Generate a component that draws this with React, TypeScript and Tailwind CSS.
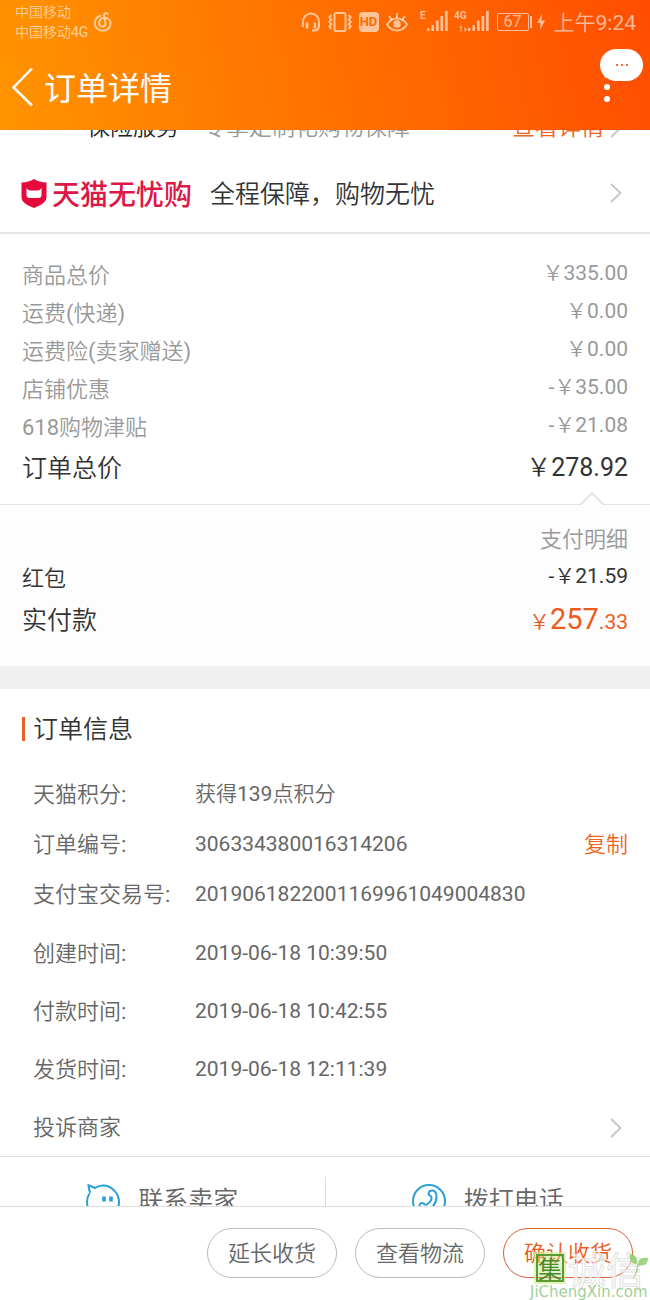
import { ReactNode } from 'react';

const prices = [
  { label: '商品总价', value: '￥335.00' },
  { label: '运费(快递)', value: '￥0.00' },
  { label: '运费险(卖家赠送)', value: '￥0.00' },
  { label: '店铺优惠', value: '-￥35.00' },
  { label: '618购物津贴', value: '-￥21.08' },
];

const ids = [
  { label: '天猫积分:', value: '获得139点积分' },
  { label: '订单编号:', value: '306334380016314206', copy: true },
  { label: '支付宝交易号:', value: '2019061822001169961049004830' },
];

const times = [
  { label: '创建时间:', value: '2019-06-18 10:39:50' },
  { label: '付款时间:', value: '2019-06-18 10:42:55' },
  { label: '发货时间:', value: '2019-06-18 12:11:39' },
];

const Chevron = () => (
  <svg className="w-3 h-5 mr-1 shrink-0" viewBox="0 0 12 20" fill="none" stroke="#c8c8c8" strokeWidth="2">
    <path d="M1 1l9.5 9L1 19" />
  </svg>
);

const MusicIcon = () => (
  <svg className="w-5 h-5" viewBox="0 0 20 20" fill="none" stroke="currentColor" strokeWidth="2" strokeLinecap="round">
    <path d="M7.5 3.8C4 5 1.8 7.800 1.8 11.200c0 4.300 3.500 7.500 7.800 7.500s7.900-3.100 7.900-7.200c0-3.300-2.600-5.700-6-5.700-3 0-5.400 2-5.400 4.900 0 2.300 1.600 3.800 3.500 3.800s3.200-1.500 2.900-3.300L11.200 4.600c-.4-2 .2-3.400 1.600-3.500.8 0 1.400.3 1.900.8" />
  </svg>
);

const HeadsetIcon = () => (
  <svg className="w-5 h-5" viewBox="0 0 20 20" fill="none" stroke="currentColor" strokeWidth="2">
    <path d="M2 15V9.500a8 8 0 0 1 16 0V14c0 3-1.800 4.600-5 4.600h-2" />
    <path d="M6 10.500v6M14 10.500v6" strokeWidth="2.600" />
  </svg>
);

const VibrateIcon = () => (
  <svg className="w-6 h-5" viewBox="0 0 24 20" fill="none" stroke="currentColor" strokeWidth="2">
    <rect x="6.500" y="1" width="11" height="18" rx="1.500" />
    <path d="M3.300 3l-2 2.300 2 2.300-2 2.300 2 2.300-2 2.300 2 2.300M20.700 3l2 2.300-2 2.300 2 2.300-2 2.300 2 2.300-2 2.300" />
  </svg>
);

const EyeIcon = () => (
  <svg className="w-[22px] h-5" viewBox="0 0 22 20" fill="none" stroke="currentColor" strokeWidth="2">
    <path d="M1 12.500C3.500 8.500 7 6.500 11 6.500s7.500 2 10 6c-2.500 4-6 6-10 6s-7.500-2-10-6z" />
    <circle cx="11" cy="12" r="3.800" fill="currentColor" stroke="none" />
    <path d="M11 1v5M3 4l3 4M19 4l-3 4" />
  </svg>
);

const Signal = ({ label, data }: { label: string; data?: boolean }) => (
  <div className="flex h-6">
    <div className="flex flex-col w-3 items-end pr-px">
      <span className="text-[10px] leading-3 font-bold">{label}</span>
      {data && (
        <svg className="w-2 h-2 mt-[3px]" viewBox="0 0 8 8" fill="currentColor">
          <path d="M2.500 0v7h-1V3H0zM5.500 2L8 4.500 5.500 7z" />
        </svg>
      )}
    </div>
    <svg className="w-[22px] h-5 mt-px" viewBox="0 0 22 20" fill="currentColor">
      <path d="M0 17h2.500v3H0zM4.500 14H7v6H4.500zM9 9.500h2.700V20H9zM13.500 5h2.700v15h-2.700zM18 0h2.700v20H18z" />
    </svg>
  </div>
);

const StatusBar = () => (
  <div className="flex items-center justify-between h-11 pl-[15px] pr-[14px] text-white/60">
    <div className="flex items-center gap-[5px]">
      <div className="text-[14px] leading-5">
        <p>中国移动</p>
        <p>中国移动4G</p>
      </div>
      <MusicIcon />
    </div>
    <div className="flex items-center gap-[7px]">
      <HeadsetIcon />
      <VibrateIcon />
      <span className="flex items-center justify-center w-5 h-5 rounded-sm bg-white/60 text-[13px] font-bold text-[#ff6a00]">HD</span>
      <EyeIcon />
      <Signal label="E" />
      <Signal label="4G" data />
      <div className="flex items-center gap-px mr-[2px]">
        <span className="flex items-center justify-center w-8 h-[18px] border border-white/60 rounded-xs text-[16px]">67</span>
        <span className="w-[2px] h-3 bg-white/60" />
        <svg className="w-2 h-4 ml-1" viewBox="0 0 8 16" fill="currentColor">
          <path d="M5 0L0 9h3.500L3 16l5-9.500H4.500z" />
        </svg>
      </div>
      <span className="pt-[2px] text-[21px] leading-6">上午9:24</span>
    </div>
  </div>
);

const Header = () => (
  <header className="h-[130px] shrink-0 bg-linear-[78deg] from-[#ff9400] to-[#ff4d00] text-white">
    <StatusBar />
    <div className="relative flex items-center h-[86px] pl-3 pr-10">
      <button aria-label="返回" className="mr-[11px]">
        <svg className="w-[21px] h-10" viewBox="0 0 21 40" fill="none" stroke="currentColor" strokeWidth="2.500">
          <path d="M20 1.500L1.500 20.500 20 38.500" />
        </svg>
      </button>
      <h1 className="pt-1 font-[Roboto,'Noto_Sans_CJK_SC',sans-serif] text-[32px] leading-10">订单详情</h1>
      <button aria-label="更多" className="flex flex-col gap-[6px] ml-auto">
        <span className="size-[6px] rounded-full bg-white" />
        <span className="size-[6px] rounded-full bg-white" />
        <span className="size-[6px] rounded-full bg-white" />
      </button>
      <button aria-label="消息" className="absolute top-[5px] right-[7px] flex items-center justify-center gap-[3px] w-[43px] h-8 rounded-full bg-white">
        <span className="size-[2px] bg-[#f26a3a]" />
        <span className="size-[2px] bg-[#f26a3a]" />
        <span className="size-[2px] bg-[#f26a3a]" />
      </button>
    </div>
  </header>
);

const Services = () => (
  <section className="border-b-2 border-[#e6e6e6]">
    <div className="flex items-center h-10 -mt-[22px] pl-[87px] pr-6 text-[23px] leading-8">
      <span className="text-[#222]">保险服务</span>
      <span className="ml-6 text-[#999]">专享定制化购物保障</span>
      <a href="#detail" className="ml-auto mr-[6px] text-[#f0641e]">查看详情</a>
      <Chevron />
    </div>
    <a href="#tmall" className="flex items-center h-[84px] pt-[6px] pl-[21px] pr-6">
      <svg className="w-[26px] h-[29px] mr-[5px]" viewBox="0 0 26 29">
        <path d="M13 0c3.500 2.300 7.500 3.300 12.500 3.500V18c0 5-5 8-12.500 11C5.500 26 .5 23 .5 18V3.500C5.500 3.300 9.500 2.300 13 0z" fill="#e60a3c" />
        <path d="M5.500 9c1 1.500 2 2.500 3.500 2.500h8c1.500 0 2.500-1 3.500-2.500v7c0 2-1 3-3 3h-9c-2 0-3-1-3-3z" fill="#fff" />
      </svg>
      <span className="font-['Noto_Sans_CJK_SC',sans-serif] text-[28px] leading-10 font-medium text-[#dd1746]">天猫无忧购</span>
      <span className="pt-1 ml-[18px] mr-auto text-[25px] leading-10 text-[#333]">全程保障，购物无忧</span>
      <Chevron />
    </a>
  </section>
);

const Row = ({ label, children }: { label: string; children: ReactNode }) => (
  <div className="flex items-center justify-between h-[38px]">
    <dt className="pt-[2px] text-[22px]">{label}</dt>
    <dd>{children}</dd>
  </div>
);

const Prices = () => (
  <section className="relative pt-[21px] pb-[13px] px-[22px] border-b border-[#e4e4e4]">
    <dl className="text-[21px] text-[#999]">
      {prices.map((p) => (
        <Row key={p.label} label={p.label}>
          {p.value}
        </Row>
      ))}
      <div className="flex items-center justify-between h-[46px] text-[25px] text-[#333]">
        <dt className="pt-[2px]">订单总价</dt>
        <dd>￥278.92</dd>
      </div>
    </dl>
    <svg className="absolute right-[46px] -bottom-px w-6 h-[13px]" viewBox="0 0 24 13" fill="#fdfdfd" stroke="#dcdcdc" strokeWidth="1.500">
      <path d="M0 13L12 1l12 12" />
    </svg>
  </section>
);

const Payment = () => (
  <section className="pt-4 pb-[23px] px-[22px] bg-[#fdfdfd]">
    <p className="h-[37px] leading-[38px] text-[22px] text-right text-[#999]">支付明细</p>
    <dl className="text-[21px] text-[#333]">
      <Row label="红包">-￥21.59</Row>
      <div className="flex items-center justify-between h-[47px] text-[25px]">
        <dt className="pt-[2px]">实付款</dt>
        <dd className="text-[21px] text-[#ee5a1c]">
          ￥<span className="text-[29px]">257</span>.33
        </dd>
      </div>
    </dl>
  </section>
);

const OrderInfo = () => (
  <section className="pl-[33px] pr-[22px] text-[21px] text-[#666] border-b border-[#ddd]">
    <h2 className="flex items-center h-20 -ml-[11px] text-[25px] text-[#333]">
      <span className="w-[3px] h-6 mr-2 bg-[#e8622c]" />
      <span className="pt-[2px]">订单信息</span>
    </h2>
    <dl className="pt-px mb-[5px]">
      {ids.map((row) => (
        <div key={row.label} className="flex items-center h-[50px]">
          <dt className="w-[162px] pb-[2px] text-[22px]">{row.label}</dt>
          <dd>{row.value}</dd>
          {row.copy && <button className="ml-auto pb-[2px] text-[22px] text-[#f0641e]">复制</button>}
        </div>
      ))}
    </dl>
    <dl>
      {times.map((row) => (
        <div key={row.label} className="flex items-center h-[58px]">
          <dt className="w-[162px] pb-[2px] text-[22px]">{row.label}</dt>
          <dd>{row.value}</dd>
        </div>
      ))}
    </dl>
    <a href="#complain" className="flex items-center justify-between h-[57px] pr-[2px]">
      <span className="text-[22px]">投诉商家</span>
      <Chevron />
    </a>
  </section>
);

const Contact = () => (
  <section className="flex items-center h-[88px] text-[25px] text-[#666]">
    <button className="flex flex-1 items-center justify-center gap-[18px]">
      <svg className="w-[34px] h-[34px]" viewBox="0 0 34 34" fill="none" stroke="#2a9fd8" strokeWidth="2">
        <path d="M3.500 9.500C1.800 12 1 14.500 1 18c0 8.500 7 15 16 15s16-6.500 16-15S26 1.500 17 1.500c-3 0-5.500.8-8 2.500L2.500 1.200c.2 3 .6 5.500 1.800 7.800" />
        <path d="M18 12.500v5M25 12.500v5" strokeWidth="3.600" />
      </svg>
      联系卖家
    </button>
    <span className="w-px h-12 bg-[#ddd]" />
    <button className="flex flex-1 items-center justify-center gap-[18px]">
      <svg className="w-[34px] h-[34px]" viewBox="0 0 34 34" fill="none" stroke="#2a9fd8" strokeWidth="2">
        <circle cx="17" cy="17" r="16" />
        <path d="M16.500 10c0-2.500 2-4 4.300-3.500 2.500.5 3.700 3 3.700 6.500 0 7-5 12.500-11 12.500-4 0-6-2-6-4s2-3 4-2c1.500.8 2 2 3.500 1 3-2 5.500-5.500 4-8-.8-1.300-2.500-1-2.500-2.500z" />
      </svg>
      拨打电话
    </button>
  </section>
);

const Footer = () => (
  <footer className="flex items-start gap-[18px] justify-end h-[94px] shrink-0 pt-[21px] pr-[17px] border-t border-[#ddd] bg-white text-[22px] text-[#666]">
    <button className="w-[130px] h-[50px] rounded-full border border-[#bbb]">延长收货</button>
    <button className="w-[130px] h-[50px] rounded-full border border-[#bbb]">查看物流</button>
    <button className="w-[130px] h-[50px] rounded-full border border-[#d9602f] text-[#ee5a1c]">确认收货</button>
  </footer>
);

const Watermark = () => (
  <div className="absolute bottom-0 right-0 w-[120px] pointer-events-none">
    <div className="flex items-center gap-1 pl-[6px] h-8">
      <span className="flex items-center justify-center w-7 h-7 shrink-0 border-2 border-[#5b9a35] bg-[#b8e07a]/40 font-['Noto_Sans_CJK_SC',sans-serif] text-[24px] leading-6 text-[#4c8a2c] outline-2 outline-[#d5f09a]/70">
        集
      </span>
      <span className="font-['Noto_Sans_CJK_SC',sans-serif] text-[38px] leading-8 whitespace-nowrap text-white/60 [-webkit-text-stroke:1px_#e2e2e2]">诚信</span>
    </div>
    <svg className="absolute top-0 right-0 w-[22px] h-7" viewBox="0 0 20 28" fill="#8fce6a" fillOpacity=".85">
      <path d="M8 12C2 12 0 8 1 2c5 0 8 4 7 10zM9 13c0-6 4-8 10-7 0 6-4 9-10 7zM8 12l1.500 1C9 19 7 24 3 28c3-5 5-10 5-16z" />
    </svg>
    <p className="font-['DejaVu_Sans'] text-[15px] leading-4 whitespace-nowrap text-[#a3cf9a]">JiChengXin.com</p>
  </div>
);

const App = () => (
  <div className="relative flex flex-col h-screen overflow-hidden bg-white font-[Roboto,'Noto_Sans_CJK_SC_DemiLight','Noto_Sans_CJK_SC_Light','Noto_Sans_CJK_SC',sans-serif]">
    <Header />
    <main className="flex-1 min-h-0 overflow-hidden">
      <Services />
      <Prices />
      <Payment />
      <div className="h-[23px] bg-[#f0f0f0]" />
      <OrderInfo />
      <Contact />
    </main>
    <Footer />
    <Watermark />
  </div>
);

export default App;
